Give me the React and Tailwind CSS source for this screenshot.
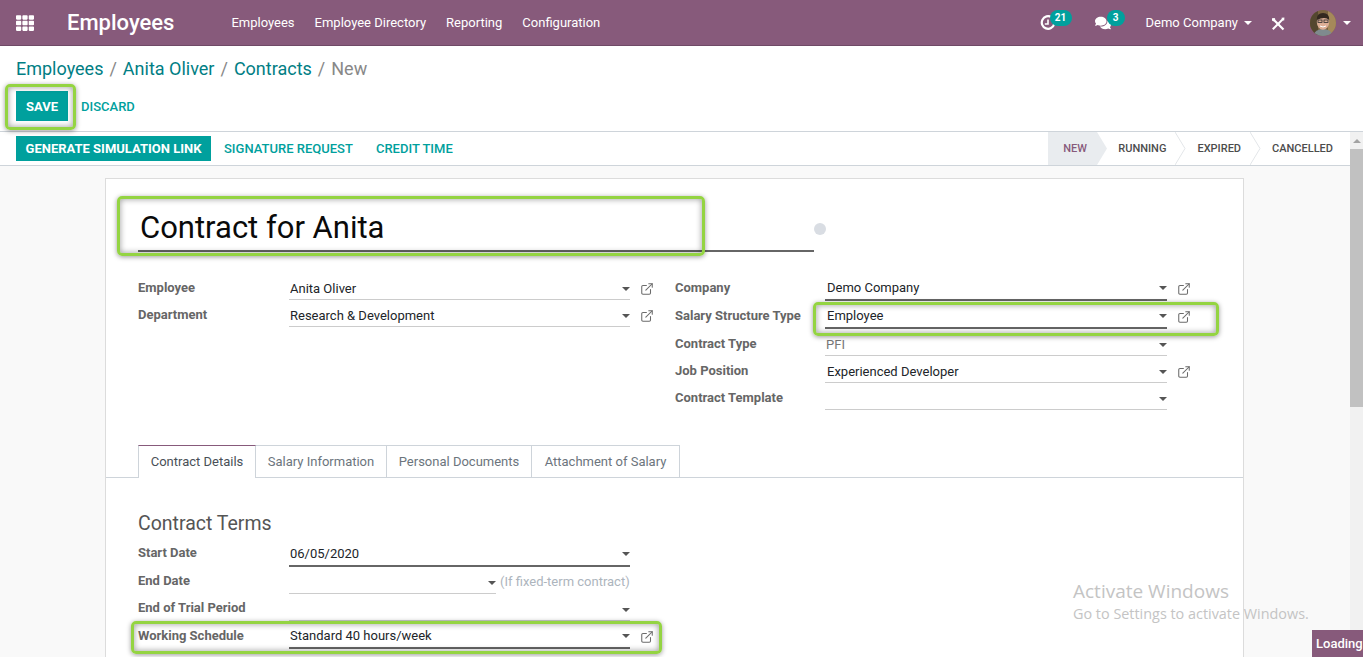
import React from 'react';
import { FaTh, FaComments } from 'react-icons/fa';
import { ExternalLink } from 'lucide-react';

const Caret = ({ className = 'border-t-[#555]' }) => (
  <span className={`inline-block w-0 h-0 border-x-[4px] border-x-transparent border-t-[4px] ${className}`} />
);

const Field = ({ value, width, strong, link = true, muted, pad = 'pl-[1px]', children }) => (
  <div className="flex items-start">
    <div className={`flex items-center ${strong ? 'h-[27px] pt-[3px] border-b-2 border-[#666]' : 'h-[26px] pt-[4px] border-b border-[#ccc]'} ${pad} ${width}`}>
      <span className={`flex-1 text-[13px] truncate ${muted ? 'text-[#777]' : 'text-[#212529]'}`}>{value}</span>
      <Caret />
    </div>
    {children}
    {link && <ExternalLink size={14} strokeWidth={1.8} className="ml-[10px] mt-[8px] text-[#6b6b6b]" />}
  </div>
);

const Row = ({ label, labelWidth = 'w-[151px]', height = 'h-[27px]', labelPad = 'pt-[5px]', children }) => (
  <div className={`flex ${height}`}>
    <div className={`${labelWidth} ${labelPad} text-[13px] font-bold text-[#666] leading-[18px] shrink-0`}>{label}</div>
    {children}
  </div>
);

const Highlight = ({ className }) => (
  <div className={`absolute pointer-events-none rounded-[5px] border-[3px] border-[#94d442] shadow-[0_1px_5px_rgba(0,0,0,0.4),inset_0_0_6px_rgba(0,0,0,0.4)] ${className}`} />
);

const StatusStep = ({ label, active, pad, last }) => (
  <div className={`relative flex items-center h-full pt-[1px] text-[11px] font-medium ${pad} ${active ? 'bg-[#e9ecef] text-[#875A7B]' : 'text-[#4c4c4c]'}`}>
    {label}
    {!last && (
      <svg width="11" height="33" viewBox="0 0 11 33" className="absolute left-full top-0">
        <path d="M0 0 L10 16.5 L0 33" fill={active ? '#e9ecef' : '#fff'} stroke={active ? 'none' : '#e3e6e9'} />
      </svg>
    )}
  </div>
);

const Tab = ({ label, active, width }) => (
  <div className={`${width} h-[33px] text-center text-[13px] leading-[32px] border-x border-[#ced4da] ${active ? 'border-t border-t-[#875A7B] bg-white text-[#495057] relative z-10' : 'border-t border-t-[#ced4da] text-[#6c757d] border-l-0'}`}>
    {label}
  </div>
);

const Avatar = () => (
  <svg width="26" height="26" viewBox="0 0 26 26" className="rounded-full">
    <rect width="26" height="26" fill="#7a6340" />
    <rect x="0" y="0" width="8" height="26" fill="#54472f" />
    <rect x="18" y="0" width="8" height="26" fill="#a5895a" />
    <path d="M3 26 Q5 19 13 19 Q21 19 23 26 Z" fill="#7f8a8e" />
    <ellipse cx="13" cy="12" rx="6.2" ry="7.8" fill="#dcae96" />
    <path d="M6.8 10 Q6.5 3 13 3 Q19.5 3 19.2 10 Q15 6 6.8 10 Z" fill="#33281f" />
    <rect x="8" y="10" width="4" height="2.4" fill="none" stroke="#2d2d2d" strokeWidth="0.8" />
    <rect x="14" y="10" width="4" height="2.4" fill="none" stroke="#2d2d2d" strokeWidth="0.8" />
    <path d="M10 16 Q13 18 16 16" stroke="#fff" strokeWidth="1" fill="none" />
  </svg>
);

const ToolsIcon = () => (
  <svg width="14" height="14" viewBox="0 0 14 14" className="ml-[19px] mt-[2px]">
    <path d="M3 3 L12.5 12.5" stroke="#fff" strokeWidth="2.2" />
    <path d="M1 1.2 L3.6 1 L4.4 2.2 L2.4 4.4 L1 3.6 Z" fill="#fff" />
    <path d="M12 2 L1.8 12.2" stroke="#fff" strokeWidth="2" />
    <path d="M10.5 0.8 L13.4 0.6 L13.2 3.4 L11.4 3.2 Z" fill="#fff" />
  </svg>
);

export default function App() {
  return (
    <div className="relative w-[1363px] h-[657px] overflow-hidden bg-white font-['Roboto',sans-serif] text-[#212529]">
      {/* top navbar */}
      <nav className="h-[46px] bg-[#875A7B] border-b border-[#6f4a66] flex items-center text-white">
        <FaTh size={18} className="ml-[16px] text-white" />
        <span className="ml-[33px] text-[22px] font-medium leading-none">Employees</span>
        <div className="ml-[57px] flex gap-[20px] text-[13px]">
          <span>Employees</span>
          <span>Employee Directory</span>
          <span>Reporting</span>
          <span>Configuration</span>
        </div>
        <div className="ml-auto flex items-center h-full">
          <div className="relative w-[48px] h-full flex items-center">
            <svg width="16" height="16" viewBox="0 0 16 16" className="ml-[1px]">
              <path d="M11.5 2.2 A6.3 6.3 0 1 0 14.2 9" fill="none" stroke="#fff" strokeWidth="2.2" />
              <path d="M8 4.5 V9 H4.8" fill="none" stroke="#fff" strokeWidth="1.6" />
            </svg>
            <span className="absolute left-[11px] top-[10px] h-[16px] w-[22px] rounded-full bg-[#00A09D] text-[10px] font-bold text-center leading-[16px]">21</span>
          </div>
          <div className="relative w-[51px] h-full flex items-center ml-[8px]">
            <FaComments size={16} className="text-white" />
            <span className="absolute left-[12px] top-[10px] h-[16px] w-[18px] rounded-full bg-[#00A09D] text-[10px] font-bold text-center leading-[16px]">3</span>
          </div>
          <span className="text-[13px]">Demo Company</span>
          <Caret className="border-t-white ml-[6px]" />
          <ToolsIcon />
          <div className="ml-[25px]"><Avatar /></div>
          <Caret className="border-t-white ml-[7px] mr-[12px]" />
        </div>
      </nav>

      {/* breadcrumb and buttons */}
      <div className="h-[86px] pl-[16px] border-b border-[#ced4da]">
        <div className="pt-[11px] text-[18px] leading-[24px]">
          <span className="text-[#017e84]">Employees</span>
          <span className="text-[#888] mx-[6px]">/</span>
          <span className="text-[#017e84]">Anita Oliver</span>
          <span className="text-[#888] mx-[6px]">/</span>
          <span className="text-[#017e84]">Contracts</span>
          <span className="text-[#888] mx-[6px]">/</span>
          <span className="text-[#888]">New</span>
        </div>
        <div className="mt-[10px] flex items-center">
          <div className="w-[52px] h-[30px] bg-[#00A09D] text-white text-[13px] font-bold text-center leading-[31px]">SAVE</div>
          <span className="ml-[13px] pt-[1px] text-[13px] font-medium text-[#00A09D]">DISCARD</span>
        </div>
      </div>

      <div className="flex h-[525px]">
        <div className="flex-1 min-w-0">
          {/* status bar */}
          <div className="h-[34px] border-b border-[#ced4da] flex items-center pl-[16px] bg-white">
            <div className="h-[25px] w-[195px] bg-[#00A09D] text-white text-[13px] font-bold flex items-center justify-center whitespace-nowrap">GENERATE SIMULATION LINK</div>
            <span className="ml-[13px] text-[13px] font-medium text-[#00A09D]">SIGNATURE REQUEST</span>
            <span className="ml-[23px] text-[13px] font-medium text-[#00A09D]">CREDIT TIME</span>
            <div className="ml-auto flex h-full">
              <StatusStep label="NEW" active pad="pl-[15px] pr-[9px] w-[49px]" />
              <StatusStep label="RUNNING" pad="pl-[21px] pr-[9px]" />
              <StatusStep label="EXPIRED" pad="pl-[22px] pr-[9px]" />
              <StatusStep label="CANCELLED" pad="pl-[22px] pr-[17px]" last />
            </div>
          </div>

          {/* form */}
          <div className="h-[491px] bg-[#f9f9f9] pt-[12px] pl-[105px] overflow-hidden">
            <div className="w-[1139px] h-[500px] bg-white border border-[#dcdcdc]">
              <div className="pl-[32px] pt-[29px]">
                <div className="relative w-[676px] h-[44px] border-b-2 border-[#666] text-[31px] leading-[40px] text-[#0a0a0a] pl-[2px]">
                  Contract for Anita
                  <span className="absolute left-[676px] top-[15px] w-[12px] h-[12px] rounded-full bg-[#d9dde3]" />
                </div>
                <div className="flex mt-[22px]">
                  <div className="w-[537px]">
                    <Row label="Employee"><Field value="Anita Oliver" width="w-[341px]" /></Row>
                    <Row label="Department"><Field value="Research & Development" width="w-[341px]" /></Row>
                  </div>
                  <div>
                    <Row label="Company" labelWidth="w-[150px]" height="h-[28px]"><Field value="Demo Company" width="w-[342px]" strong pad="pl-[2px]" /></Row>
                    <Row label="Salary Structure Type" labelWidth="w-[150px]" height="h-[28px]"><Field value="Employee" width="w-[342px]" strong pad="pl-[2px]" /></Row>
                    <Row label="Contract Type" labelWidth="w-[150px]"><Field value="PFI" width="w-[342px]" link={false} muted /></Row>
                    <Row label="Job Position" labelWidth="w-[150px]"><Field value="Experienced Developer" width="w-[342px]" pad="pl-[2px]" /></Row>
                    <Row label="Contract Template" labelWidth="w-[150px]"><Field value="" width="w-[342px]" link={false} /></Row>
                  </div>
                </div>
              </div>

              {/* tabs */}
              <div className="mt-[34px] border-b border-[#ced4da] pl-[32px] flex h-[33px]">
                <div className="flex">
                  <Tab label="Contract Details" active width="w-[118px]" />
                  <Tab label="Salary Information" width="w-[131px]" />
                  <Tab label="Personal Documents" width="w-[145px]" />
                  <Tab label="Attachment of Salary" width="w-[148px]" />
                </div>
              </div>

              <div className="pl-[32px] pt-[33px]">
                <h2 className="text-[19.5px] leading-[26px] text-[#555]">Contract Terms</h2>
                <div className="mt-[3px]">
                  <Row label="Start Date" height="h-[28px]" labelPad="pt-[4px]"><Field value="06/05/2020" width="w-[341px]" strong link={false} /></Row>
                  <Row label="End Date" labelPad="pt-[4px]">
                    <Field value="" width="w-[207px]" link={false}>
                      <span className="ml-[4px] mt-[4px] text-[13px] text-[#adb5bd] whitespace-nowrap">(If fixed-term contract)</span>
                    </Field>
                  </Row>
                  <Row label="End of Trial Period" labelPad="pt-[4px]"><Field value="" width="w-[341px]" link={false} /></Row>
                  <Row label="Working Schedule"><Field value="Standard 40 hours/week" width="w-[341px]" strong /></Row>
                </div>
              </div>
            </div>
          </div>
        </div>

        {/* scrollbar */}
        <div className="w-[13px] bg-[#f1f1f1] flex flex-col items-center">
          <span className="mt-[7px] w-0 h-0 border-x-[4px] border-x-transparent border-b-[4px] border-b-[#a3a3a3]" />
          <div className="mt-[6px] w-full h-[258px] bg-[#c1c1c1]" />
        </div>
      </div>

      {/* annotation boxes over the form */}
      <Highlight className="left-[5px] top-[84px] w-[71px] h-[46px]" />
      <Highlight className="left-[117px] top-[196px] w-[588px] h-[60px]" />
      <Highlight className="left-[813px] top-[302px] w-[406px] h-[34px]" />
      <Highlight className="left-[131px] top-[621px] w-[531px] h-[33px]" />

      {/* windows watermark */}
      <div className="absolute left-[1073px] top-[578px] font-['Open_Sans',sans-serif] text-[#c4c4c4] pointer-events-none">
        <div className="text-[19px] leading-[26px]">Activate Windows</div>
        <div className="text-[14.4px] leading-[20px]">Go to Settings to activate Windows.</div>
      </div>

      <div className="absolute right-0 bottom-0 w-[51px] h-[27px] bg-[#875A7B] text-white text-[13px] font-medium leading-[27px] pl-[4px] overflow-hidden">Loading</div>
    </div>
  );
}
